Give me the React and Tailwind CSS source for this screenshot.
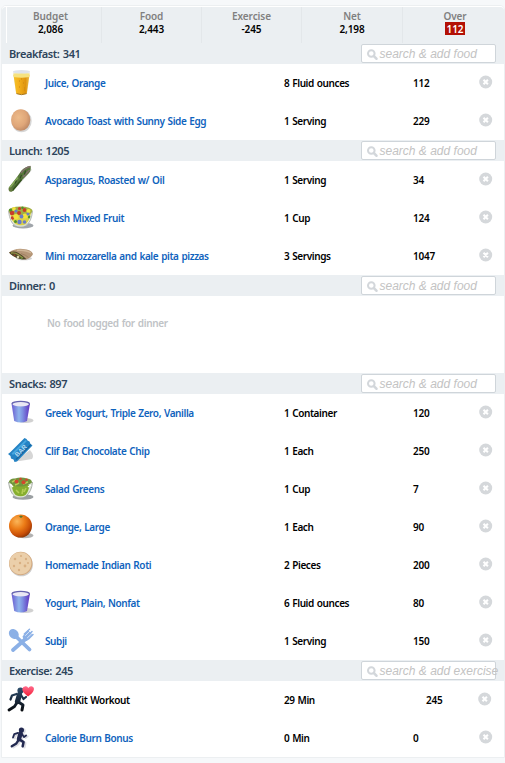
import React from 'react';

const Juice = () => (
  <g>
    <defs>
      <linearGradient id="juice" x1="0" x2="1">
        <stop offset="0" stopColor="#f3c22c" /><stop offset=".3" stopColor="#f5b21c" />
        <stop offset=".75" stopColor="#df9510" /><stop offset="1" stopColor="#efc04a" />
      </linearGradient>
    </defs>
    <path d="M7 7.500 L10 30 Q15.500 32 21 30 L24 7.500Z" fill="#eef0f0" />
    <path d="M7.500 11 L10.200 29.500 Q15.500 31.500 20.800 29.500 L23.500 11Z" fill="url(#juice)" />
    <path d="M7.300 9.500 Q15.500 8.500 23.700 9.500 L23.300 13 Q15.500 14.500 7.700 13Z" fill="#f6e27f" />
    <ellipse cx="15.500" cy="7.800" rx="8.500" ry="1.800" fill="#dfe3ea" />
    <path d="M10.500 29.600 Q15.500 31.800 20.600 29.600" stroke="#a87820" strokeWidth="1" fill="none" />
    <path d="M13 17h1m3 2h1m-5 4h1m4 1h1m-4-9h1m2 11h1" stroke="#c98712" strokeWidth="1" />
  </g>
);

const Egg = () => (
  <g>
    <defs>
      <radialGradient id="egg" cx=".38" cy=".38" r=".7">
        <stop offset="0" stopColor="#edbb8a" /><stop offset=".6" stopColor="#dfa679" /><stop offset="1" stopColor="#b98462" />
      </radialGradient>
    </defs>
    <ellipse cx="15.500" cy="19" rx="10.200" ry="11.200" fill="#8a8a8a" opacity=".35" />
    <ellipse cx="14.700" cy="18" rx="9.600" ry="10.800" fill="url(#egg)" />
  </g>
);

const Asparagus = () => (
  <g>
    <path d="M5 31 L12 25 L25 10 L26 8 L22 10 L8 26Z" fill="#a5a5a5" opacity=".45" />
    <path d="M2.500 27 L11 16 L15.500 9.500 Q19 5.500 24.500 5 Q25.500 9 23 12 L16.500 18.500 L7 30 Q4 31.500 2.500 27Z" fill="#56763a" />
    <path d="M3.500 27 L12 16.500" stroke="#86a95a" strokeWidth="1.600" />
    <path d="M6.500 29.500 L15.500 18.500" stroke="#35531f" strokeWidth="1.500" />
    <path d="M15 12 Q19 6.500 24.500 5.500 M17 16 L23.500 9" stroke="#82716c" strokeWidth="1.600" fill="none" />
    <path d="M9 22.500 L10.500 19.500 M14 17.500 L15.500 14 M18.500 13.500 L19.500 9.500" stroke="#304a22" strokeWidth="1.100" />
    <ellipse cx="4.600" cy="28.500" rx="2" ry="2.200" fill="#64793f" />
  </g>
);

const FruitBowl = () => (
  <g>
    <ellipse cx="17" cy="26.500" rx="10.500" ry="3" fill="#777f86" opacity=".7" />
    <path d="M2.500 12 Q4 24 9 26.500 Q15 29 20 26.500 Q25.500 23 26.500 12Z" fill="#d9dfcd" />
    <path d="M4 14 Q5 22 9.500 25 Q15 27.500 20 25 Q24 22 25 14Z" fill="#dcd246" />
    <ellipse cx="14.500" cy="12" rx="12" ry="4.500" fill="#a2b044" />
    <g fill="#c93d2a"><circle cx="6" cy="14" r="2.300" /><circle cx="13" cy="14" r="2" /><circle cx="18.500" cy="11" r="1.900" /><circle cx="13.500" cy="9.500" r="1.600" /><circle cx="6.500" cy="19" r="1.800" /></g>
    <g fill="#f3e33c"><circle cx="10" cy="17.500" r="2.600" /><circle cx="19" cy="17" r="2.500" /><circle cx="8" cy="10" r="1.900" /><circle cx="22.500" cy="12" r="2" /></g>
    <g fill="#6a7cc9"><circle cx="10" cy="12" r="1.600" /><circle cx="15.500" cy="17.500" r="1.900" /><circle cx="13.500" cy="23" r="2.200" /><circle cx="18.500" cy="23" r="1.800" /><circle cx="22" cy="15" r="1.500" /></g>
    <g fill="#4f8f2d"><circle cx="4.500" cy="11" r="1.600" /><circle cx="16.500" cy="8.800" r="1.200" /><circle cx="23.500" cy="18" r="1.600" /><circle cx="9.500" cy="22.500" r="1.500" /></g>
    <path d="M3.500 15 Q4.500 22 8 24.500 M25.500 15 Q24.500 21 21 24.500" stroke="#f3f5f0" fill="none" strokeWidth=".8" />
    <path d="M2.500 12 Q4 24 9 26.500 M26.500 12 Q25.500 23 20 26.500" stroke="#b9bdb9" fill="none" strokeWidth="1" />
  </g>
);

const Pita = () => (
  <g>
    <ellipse cx="18" cy="21.500" rx="8" ry="1.800" fill="#999" opacity=".45" />
    <path d="M3 15.500 Q9 11 17 12 Q25.500 12.500 27 17 Q25.500 20.500 20 22.500 Q8 21.500 3 15.500Z" fill="#b59677" />
    <path d="M3 15.500 Q8 13.500 12.500 16 Q17 18.500 20.500 22.300 L16 22.500 Q7 20.500 3 15.500Z" fill="#4d4828" />
    <path d="M5 16 Q9 15.500 12 17.500 L17 21" stroke="#989548" strokeWidth="1.300" fill="none" />
    <circle cx="12" cy="20" r="1.300" fill="#ddd5b0" /><circle cx="15.500" cy="21" r="1" fill="#69923b" />
    <circle cx="8.500" cy="18.200" r="1" fill="#8f442e" />
    <path d="M11 13.300 Q20 12.500 25 16" stroke="#d0b698" strokeWidth="1.500" fill="none" />
    <path d="M15 16.500 Q20 18 22.500 20.500" stroke="#a08062" strokeWidth="1" fill="none" />
  </g>
);

const Yogurt = () => (
  <g>
    <defs>
      <linearGradient id="cup" x1="0" x2="1">
        <stop offset="0" stopColor="#6a5ad0" /><stop offset=".4" stopColor="#8fb5ec" />
        <stop offset=".6" stopColor="#7d8fe2" /><stop offset="1" stopColor="#5f31bd" />
      </linearGradient>
    </defs>
    <ellipse cx="20" cy="26.500" rx="7.500" ry="2.600" fill="#8b8b8b" opacity=".4" />
    <path d="M5.500 9.500 L8.200 27 Q15 30 21 27 L24 9.500Z" fill="url(#cup)" />
    <ellipse cx="14.700" cy="9.500" rx="9.200" ry="2.700" fill="#6664ae" />
    <ellipse cx="14.700" cy="10.300" rx="8.200" ry="2.200" fill="#e9e8f4" />
  </g>
);

const Bar = () => (
  <g>
    <path d="M9 29 L24 18 Q29 24 26 27 L14 29Z" fill="#777" opacity=".3" />
    <path d="M2 22 L4 20.500 L18.500 6 L20.500 7 L21.500 8.500 L23.500 9.500 L24.500 12 L26.500 13.500 L11 29.500 L8.500 30 L7.500 27.500 L5 26.500 L4.500 24Z" fill="#2583c4" />
    <path d="M5.500 21.500 L19.500 8 L21 9 L7 23Z" fill="#45a5df" />
    <path d="M10 27.500 L25 12.500" stroke="#1767a1" strokeWidth="1.400" />
    <text x="14.700" y="21" textAnchor="middle" transform="rotate(-46 14.700 18.500)" fontSize="6.500" fontWeight="700" letterSpacing="0" fill="#b4d9f0" fontFamily="Liberation Sans, sans-serif">BAR</text>
  </g>
);

const Salad = () => (
  <g>
    <ellipse cx="17" cy="27" rx="10.500" ry="2.700" fill="#70767a" opacity=".7" />
    <path d="M2.500 12 Q4 23 8.500 26 Q14.500 29 20 26 Q25.500 22 26.500 12Z" fill="#dfe5d6" />
    <path d="M5.500 15 Q6.500 22 9.500 25 Q15 27.500 19.500 25 Q22.500 22 23.500 15Z" fill="#86ae2e" />
    <path d="M2.800 12 Q4 8 9 8.500 Q15 6.500 21 8.500 Q26 9 26 12.500 Q20 17 14.500 16.500 Q7 17 2.800 12Z" fill="#71963f" />
    <path d="M6 12 L10 10 M17 14 L22 12 M9 15 L13 13 M10 20 L13 23 M17 19 L16 24 M20 18 L18 22" stroke="#b5ce55" strokeWidth="1.600" />
    <g fill="#d3472c"><circle cx="10.500" cy="11.500" r="2" /><circle cx="17.500" cy="12.300" r="2" /><circle cx="14.500" cy="9" r="1.300" /><circle cx="20.500" cy="9.800" r="1.300" /></g>
    <path d="M2.500 12 Q4 23 8.500 26 M26.500 12 Q25.500 22 20 26" stroke="#a9afa9" fill="none" strokeWidth="1" />
    <path d="M4 14 L7 17 M25 15 L22 17" stroke="#fff" strokeWidth="1.500" />
  </g>
);

const Orange = () => (
  <g>
    <defs>
      <radialGradient id="orange" cx=".35" cy=".3" r=".75">
        <stop offset="0" stopColor="#fbb659" /><stop offset=".45" stopColor="#ec7c17" />
        <stop offset=".8" stopColor="#c84e07" /><stop offset="1" stopColor="#8c3505" />
      </radialGradient>
    </defs>
    <ellipse cx="18.500" cy="27.500" rx="9" ry="2.800" fill="#555" opacity=".45" />
    <circle cx="14.500" cy="18" r="11.500" fill="url(#orange)" />
    <path d="M13 8.500 L15 10 L17 8.500 L15 7.500Z" fill="#56752c" />
  </g>
);

const Roti = () => (
  <g>
    <circle cx="15.300" cy="18.700" r="11.600" fill="#888" opacity=".4" />
    <circle cx="14.700" cy="17.500" r="11.700" fill="#d3aa80" />
    <circle cx="14.400" cy="17.200" r="11" fill="#ebcfaa" />
    <g fill="#d9b083"><circle cx="9" cy="13" r="1.300" /><circle cx="15" cy="10" r="1.100" /><circle cx="20" cy="13" r="1.200" /><circle cx="14" cy="17" r="1.200" /><circle cx="8" cy="20" r="1.200" /><circle cx="19" cy="20" r="1.400" /><circle cx="13" cy="24" r="1.200" /><circle cx="22" cy="17" r="1" /></g>
  </g>
);

const Utensils = () => (
  <g stroke="#8bb0e6" fill="#8bb0e6" strokeLinecap="round">
    <ellipse cx="7.800" cy="12" rx="4.500" ry="5.500" transform="rotate(-42 7.800 12)" stroke="none" />
    <path d="M10 14.500 L23.500 27.500" strokeWidth="3.800" />
    <path d="M19.500 17 L7 28" strokeWidth="3.800" />
    <path d="M16.500 14.500 L22 8 L26.500 12.500 L21 19 L18 19Z" stroke="none" />
    <path d="M18.300 12 L23.500 7.300 M20.500 15 L26 9.500 M22.500 17 L27 12.500" strokeWidth="1.500" />
    <path d="M19.500 13.500 L24.500 8.500 M21.500 15.700 L26.500 11" stroke="#eaf1fb" strokeWidth=".8" />
  </g>
);

const runnerBody = (
  <>
    <circle cx="15.500" cy="9.500" r="3.100" stroke="none" />
    <path d="M14.500 13.500 L12.500 20.500" strokeWidth="5.200" />
    <path d="M11.500 13 L7 14.500 L5.500 18.500" strokeWidth="2.200" fill="none" />
    <path d="M16 14 L18.500 18 L21 16" strokeWidth="2.200" fill="none" />
    <path d="M13.500 21 L18 24 L17 29" strokeWidth="3" fill="none" />
    <path d="M12 21.500 L9.500 25.500 L4 29" strokeWidth="2.800" fill="none" />
  </>
);

const HeartRunner = () => (
  <g>
    <defs>
      <linearGradient id="navy" x1="0" x2="0" y1="6" y2="30" gradientUnits="userSpaceOnUse">
        <stop offset="0" stopColor="#2f506f" /><stop offset=".55" stopColor="#1a2a3d" /><stop offset="1" stopColor="#090c10" />
      </linearGradient>
      <linearGradient id="heart" x1="0" x2="0" y1="0" y2="1">
        <stop offset="0" stopColor="#ff6a8c" /><stop offset="1" stopColor="#f51f35" />
      </linearGradient>
    </defs>
    <g fill="url(#navy)" stroke="url(#navy)" strokeLinecap="round" strokeLinejoin="round" transform="translate(-1 0)">{runnerBody}</g>
    <path d="M22 15.500 Q16 11 16.300 8 Q17 5 20 5.300 Q21.500 5.500 22.300 7 Q23.500 5 25.500 5.300 Q28.500 6 27.800 9 Q27 12 22 15.500Z" fill="url(#heart)" />
  </g>
);

const Runner = () => (
  <g transform="translate(2.400 3) scale(.84)" strokeLinecap="round" strokeLinejoin="round">
    <g fill="#bdbdc8" stroke="#bdbdc8" opacity=".5" transform="translate(2 1)">{runnerBody}</g>
    <g fill="#222950" stroke="#222950">{runnerBody}</g>
  </g>
);

const summary = [
  ['Budget', '2,086', 'w-[95px] pr-[7px]'],
  ['Food', '2,443', 'w-[100px]'],
  ['Exercise', '-245', 'w-[100px]'],
  ['Net', '2,198', 'w-[101px]'],
  ['Over', '112', 'w-[102px] pl-[3px]'],
];

const sections = [
  { title: 'Breakfast: 341', hint: 'search & add food', rows: [
    [Juice, 'Juice, Orange', '8 Fluid ounces', '112'],
    [Egg, 'Avocado Toast with Sunny Side Egg', '1 Serving', '229'],
  ] },
  { title: 'Lunch: 1205', hint: 'search & add food', rows: [
    [Asparagus, 'Asparagus, Roasted w/ Oil', '1 Serving', '34'],
    [FruitBowl, 'Fresh Mixed Fruit', '1 Cup', '124'],
    [Pita, 'Mini mozzarella and kale pita pizzas', '3 Servings', '1047'],
  ] },
  { title: 'Dinner: 0', hint: 'search & add food', rows: [], empty: 'No food logged for dinner' },
  { title: 'Snacks: 897', hint: 'search & add food', rows: [
    [Yogurt, 'Greek Yogurt, Triple Zero, Vanilla', '1 Container', '120'],
    [Bar, 'Clif Bar, Chocolate Chip', '1 Each', '250'],
    [Salad, 'Salad Greens', '1 Cup', '7'],
    [Orange, 'Orange, Large', '1 Each', '90'],
    [Roti, 'Homemade Indian Roti', '2 Pieces', '200'],
    [Yogurt, 'Yogurt, Plain, Nonfat', '6 Fluid ounces', '80'],
    [Utensils, 'Subji', '1 Serving', '150'],
  ] },
  { title: 'Exercise: 245', hint: 'search & add exercise', rows: [
    [HeartRunner, 'HealthKit Workout', '29 Min', '245', true],
    [Runner, 'Calorie Burn Bonus', '0 Min', '0'],
  ] },
];

function SearchBox({ hint }) {
  return (
    <div className="flex h-[19px] w-[135px] items-center whitespace-nowrap rounded-[2px] border border-[#cfd5da] bg-white pl-[5px]">
      <svg width="11" height="11" viewBox="0 0 11 11" className="mt-px shrink-0" fill="none" stroke="#d3d7db">
        <circle cx="4.300" cy="4.500" r="3.300" strokeWidth="2" />
        <path d="M6.900 7.100 L9.400 9.700" strokeWidth="2.600" strokeLinecap="round" />
      </svg>
      <span className="ml-[1.5px] pt-px font-['Liberation_Sans',Arial,sans-serif] text-[12px] italic leading-[17px] text-[#c3c3c3]">{hint}</span>
    </div>
  );
}

function Row({ row }) {
  const [Icon, name, qty, cal, synced] = row;
  return (
    <div className="flex h-[38px] items-center whitespace-nowrap pl-1 text-[10px] font-semibold tracking-[-0.4px] [word-spacing:0.7px] text-black">
      <svg width="30" height="38" viewBox="0 0 30 38" className="shrink-0"><Icon /></svg>
      <span className={synced ? 'ml-[9px] w-[239px] shrink-0 pt-px' : 'ml-[9px] w-[239px] shrink-0 pt-px text-[#0f63bd]'}>{name}</span>
      <span className="w-[129px] shrink-0 pt-px">{qty}</span>
      <span className={synced ? 'w-[65px] shrink-0 pl-[13px] pt-px tracking-[-0.2px]' : 'w-[66px] shrink-0 pt-px tracking-[-0.2px]'}>{cal}</span>
      <svg width="14" height="14" viewBox="0 0 14 14" className="mb-[2px] shrink-0">
        <circle cx="6.700" cy="7" r="6.500" fill="#d5d8db" />
        <path d="M4.500 4.800 L8.900 9.200 M8.900 4.800 L4.500 9.200" stroke="#fff" strokeWidth="2" />
      </svg>
    </div>
  );
}

export default function App() {
  return (
    <div className="h-[763px] w-[505px] overflow-hidden bg-[#f6f8fa] pl-px pt-[5px] font-['Noto_Sans','Open_Sans',sans-serif]">
      <div className="h-[753px] w-[504px] rounded-t-[5px] border border-[#eceff1] bg-white">
        <div className="flex h-[37px] rounded-t-[4px] border-t border-white bg-[#ebeff2] pl-1">
          {summary.map(([label, value, width], i) => (
            <div key={label} className={`${width} flex shrink-0 flex-col items-center border-l pt-[2px] text-[10px] font-semibold tracking-[-0.1px] ${i ? 'border-[#e3e7ea]' : 'border-white'}`}>
              <span className="h-[14px] leading-[14px] text-[#808080]">{label}</span>
              <span className={i === 4 ? '-mt-px h-[13px] bg-[#b31005] px-[2px] leading-[15px] text-white' : 'h-[13px] leading-[13px] text-black'}>{value}</span>
            </div>
          ))}
        </div>
        {sections.map(({ title, hint, rows, empty }) => (
          <section key={title}>
            <div className="flex h-[21px] items-center justify-between bg-[#ebeff2] pl-[7px] pr-[8px]">
              <h2 className="text-[11px] font-semibold leading-[21px] tracking-[-0.42px] [word-spacing:1px] text-[#2d445b]">{title}</h2>
              <SearchBox hint={hint} />
            </div>
            {rows.map((row) => <Row key={row[1]} row={row} />)}
            {empty && <p className="h-[77px] pl-[45px] pt-[19px] text-[10px] font-semibold leading-[16px] tracking-[-0.35px] [word-spacing:0.7px] text-[#c0c3c6]">{empty}</p>}
          </section>
        ))}
      </div>
    </div>
  );
}
